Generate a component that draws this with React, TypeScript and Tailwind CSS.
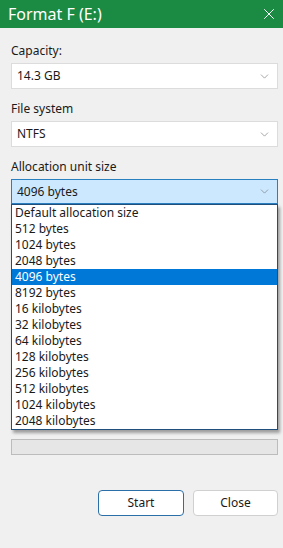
import { ChevronDown, X } from "lucide-react";

const sizes = [
  "Default allocation size",
  "512 bytes",
  "1024 bytes",
  "2048 bytes",
  "4096 bytes",
  "8192 bytes",
  "16 kilobytes",
  "32 kilobytes",
  "64 kilobytes",
  "128 kilobytes",
  "256 kilobytes",
  "512 kilobytes",
  "1024 kilobytes",
  "2048 kilobytes",
];

const Combo = ({ value, active }: { value: string; active?: boolean }) => (
  <div
    className={
      active
        ? "h-[25px] flex items-center justify-between pl-[5px] pr-[6px] border border-[#2a7fc0] bg-[#cce8ff]"
        : "h-[26px] flex items-center justify-between pl-[5px] pr-[6px] border border-[#dcdcdc] bg-white"
    }
  >
    <span>{value}</span>
    <ChevronDown className="w-[13px] h-[13px] text-[#777]" strokeWidth={1.2} />
  </div>
);

export default function App() {
  return (
    <div
      className="w-[283px] h-[548px] bg-[#f0f0f0] text-[12px] text-[#1a1a1a] flex flex-col"
      style={{ fontFamily: '"Noto Sans", sans-serif' }}
    >
      <div className="h-[28px] bg-[#1b8a43] flex items-center justify-between pl-[8px] pr-[5px] shrink-0">
        <span className="text-white text-[16px]">Format F (E:)</span>
        <X className="w-[18px] h-[18px] text-white" strokeWidth={1.3} />
      </div>

      <div className="pl-[11px] pr-[5px] pt-[12px] flex flex-col">
        <div className="h-[22px] leading-[22px]">Capacity:</div>
        <div className="mt-[1px]">
          <Combo value="14.3 GB" />
        </div>
        <div className="h-[22px] leading-[22px] mt-[9px]">File system</div>
        <div className="mt-[1px]">
          <Combo value="NTFS" />
        </div>
        <div className="h-[22px] leading-[22px] mt-[9px]">Allocation unit size</div>
        <div className="relative mt-[1px]">
          <Combo value="4096 bytes" active />
          <div className="absolute left-0 right-0 top-[25px] bg-white border border-[#1f4f7a] shadow-[2px_3px_3px_rgba(0,0,0,0.35)] z-10">
            {sizes.map((s) => (
              <div
                key={s}
                className={
                  s === "4096 bytes"
                    ? "h-[16px] leading-[16px] pl-[3px] bg-[#0078d7] text-white"
                    : "h-[16px] leading-[16px] pl-[3px]"
                }
              >
                {s}
              </div>
            ))}
          </div>
        </div>

        <div className="h-[16px] mt-[235px] border border-[#bcbcbc] bg-[#e6e6e6]" />

        <div className="flex justify-end gap-[9px] mt-[35px]">
          <button className="w-[86px] h-[26px] rounded-[4px] border border-[#2a6fa8] bg-white">Start</button>
          <button className="w-[85px] h-[26px] rounded-[4px] border border-[#d0d0d0] bg-white">Close</button>
        </div>
      </div>
    </div>
  );
}
